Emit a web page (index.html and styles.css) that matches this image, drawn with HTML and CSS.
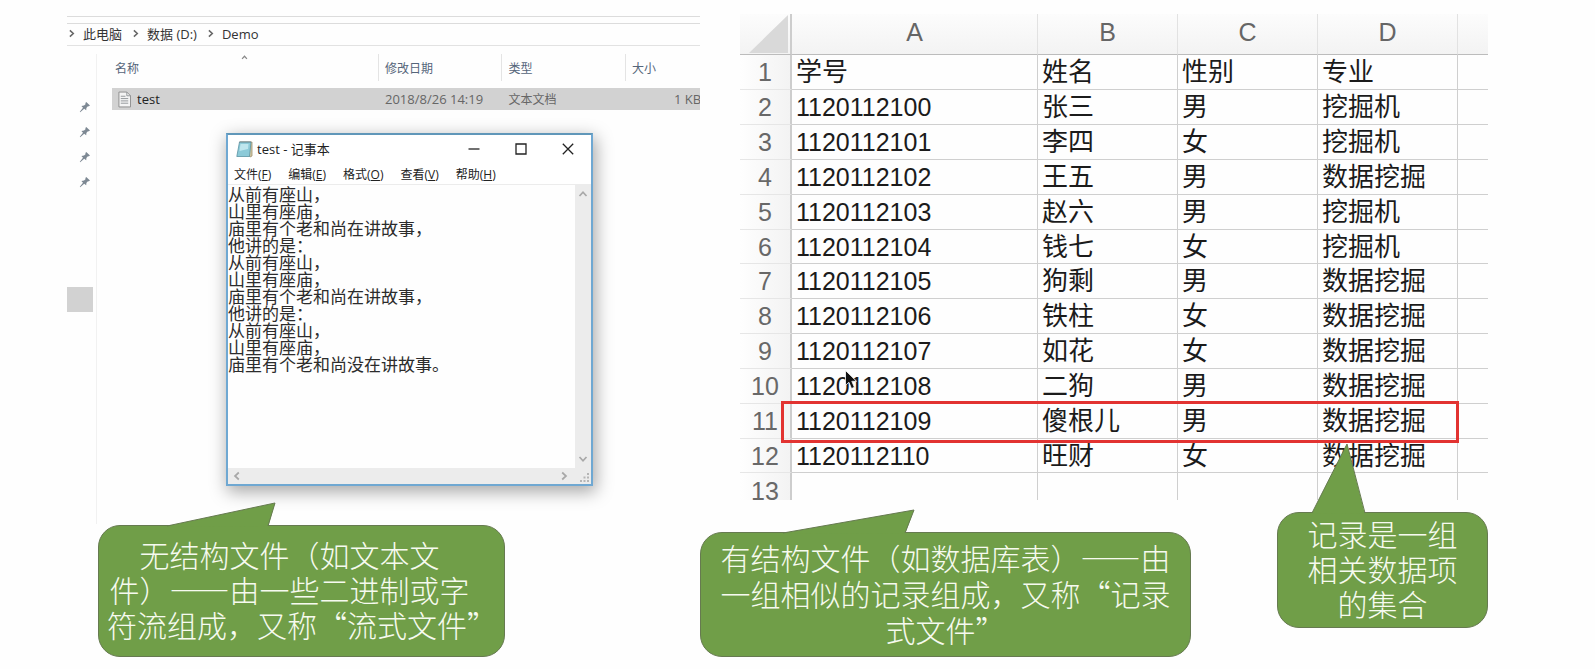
FILE: index.html
```html
<!DOCTYPE html>
<html lang="zh-CN">
<head>
<meta charset="utf-8">
<title>文件的逻辑结构</title>
<link rel="stylesheet" href="styles.css">
</head>
<body>
<svg class="defs" aria-hidden="true">
  <symbol id="pin" viewBox="0 0 12 12"><path d="M7.2 1 11 4.6 9.8 5.2 8.6 5.4 7.4 6.9 7.2 9.2 5.2 7.8 1.2 11.2 .8 10.8 4 6.8 2.4 5 5 4.6 6.5 3.3 6.4 2z" fill="#7d8893"/></symbol>
  <symbol id="up" viewBox="0 0 10 10"><path d="M1.5 7 5 3.2 8.5 7" fill="none" stroke="currentColor" stroke-width="1.7"/></symbol>
  <symbol id="down" viewBox="0 0 10 10"><path d="M1.5 3 5 6.8 8.5 3" fill="none" stroke="currentColor" stroke-width="1.7"/></symbol>
  <symbol id="left" viewBox="0 0 10 10"><path d="M6.8 1.5 3 5 6.8 8.5" fill="none" stroke="currentColor" stroke-width="1.7"/></symbol>
  <symbol id="right" viewBox="0 0 10 10"><path d="M3.2 1.5 7 5 3.2 8.5" fill="none" stroke="currentColor" stroke-width="1.7"/></symbol>
</svg>
<main class="slide">
  <div class="figures">
    <section class="explorer" aria-label="资源管理器">
      <nav class="address">
        <svg class="crumb-sep"><use href="#right"/></svg><a href="#">此电脑</a>
        <svg class="crumb-sep"><use href="#right"/></svg><a href="#">数据 (D:)</a>
        <svg class="crumb-sep"><use href="#right"/></svg><a href="#">Demo</a>
      </nav>
      <div class="panes">
        <aside class="sidebar">
          <div class="pins">
            <svg class="pin"><use href="#pin"/></svg>
            <svg class="pin"><use href="#pin"/></svg>
            <svg class="pin"><use href="#pin"/></svg>
            <svg class="pin"><use href="#pin"/></svg>
          </div>
          <div class="current"></div>
        </aside>
        <div class="files">
          <svg class="sort"><use href="#up"/></svg>
          <table class="file-table">
            <colgroup><col class="f-name"><col class="f-date"><col class="f-type"><col class="f-size"></colgroup>
            <thead><tr><th>名称</th><th>修改日期</th><th>类型</th><th>大小</th></tr></thead>
            <tbody>
              <tr class="spacer"><td colspan="4"></td></tr>
              <tr class="selected">
                <td><span class="file"><svg class="doc" viewBox="0 0 14 17"><path d="M1 .5h8.500l4 4v12H1z" fill="#f4f4f4" stroke="#8a8a8a"/><path d="M9.500.5v4h4M3 5h5M3 7.500h8M3 10h8M3 12.500h8" fill="none" stroke="#8f9396"/></svg>test</span></td>
                <td>2018/8/26 14:19</td><td class="kind">文本文档</td><td class="size">1 KB</td>
              </tr>
            </tbody>
          </table>
        </div>
      </div>

      <section class="notepad" aria-label="记事本">
        <header class="titlebar">
          <svg class="app" viewBox="0 0 17 17"><path d="M4 1h12v14l-2 1z" fill="#d8c9a0" stroke="#9b8f72" stroke-width=".8"/><path d="M3.500 1H15l-1.500 14.500H.8z" fill="#8ccad8" stroke="#5a93a3" stroke-width=".8"/><path d="M4.500 3h8l-.5 5-8.500 2z" fill="#bfe6ee"/><path d="M3.500 1H15" stroke="#777" stroke-dasharray="1 1"/></svg>
          <h1 class="title">test - 记事本</h1>
          <button class="win" aria-label="最小化"><svg viewBox="0 0 12 12"><path d="M.5 6h11" stroke="#222" stroke-width="1.300"/></svg></button>
          <button class="win" aria-label="最大化"><svg viewBox="0 0 12 12"><path d="M1 1h10v10H1z" fill="none" stroke="#222" stroke-width="1.300"/></svg></button>
          <button class="win" aria-label="关闭"><svg viewBox="0 0 12 12"><path d="m.8.8 10.400 10.400m0-10.400L.8 11.200" stroke="#222" stroke-width="1.300"/></svg></button>
        </header>
        <nav class="menu">
          <button>文件(<u>F</u>)</button><button>编辑(<u>E</u>)</button><button>格式(<u>O</u>)</button><button>查看(<u>V</u>)</button><button>帮助(<u>H</u>)</button>
        </nav>
        <div class="editor">
          <textarea class="text" aria-label="文本内容" spellcheck="false">从前有座山，
山里有座庙，
庙里有个老和尚在讲故事，
他讲的是：
从前有座山，
山里有座庙，
庙里有个老和尚在讲故事，
他讲的是：
从前有座山，
山里有座庙，
庙里有个老和尚没在讲故事。</textarea>
          <div class="vbar"><button aria-label="向上"><svg><use href="#up"/></svg></button><button aria-label="向下"><svg><use href="#down"/></svg></button></div>
        </div>
        <div class="hbar">
          <button aria-label="向左"><svg><use href="#left"/></svg></button><button aria-label="向右"><svg><use href="#right"/></svg></button>
          <svg class="grip" viewBox="0 0 10 10"><path d="M7 0h2v2H7zM7 3.500h2v2H7zM7 7h2v2H7zM3.500 3.500h2v2h-2zM3.500 7h2v2h-2zM0 7h2v2H0z" fill="#b5b5b5"/></svg>
        </div>
      </section>
    </section>

    <section class="sheet" aria-label="数据表">
      <table class="grid">
        <colgroup><col class="c-num"><col class="c-a"><col><col><col><col class="c-e"></colgroup>
        <thead><tr><th class="corner"><svg viewBox="0 0 39 38"><path d="M39 0v38H0z" fill="#d9d9d9"/></svg></th><th>A</th><th>B</th><th>C</th><th>D</th><th></th></tr></thead>
        <tbody>
          <tr><th>1</th><td>学号</td><td>姓名</td><td>性别</td><td>专业</td><td></td></tr>
          <tr><th>2</th><td>1120112100</td><td>张三</td><td>男</td><td>挖掘机</td><td></td></tr>
          <tr><th>3</th><td>1120112101</td><td>李四</td><td>女</td><td>挖掘机</td><td></td></tr>
          <tr><th>4</th><td>1120112102</td><td>王五</td><td>男</td><td>数据挖掘</td><td></td></tr>
          <tr><th>5</th><td>1120112103</td><td>赵六</td><td>男</td><td>挖掘机</td><td></td></tr>
          <tr><th>6</th><td>1120112104</td><td>钱七</td><td>女</td><td>挖掘机</td><td></td></tr>
          <tr><th>7</th><td>1120112105</td><td>狗剩</td><td>男</td><td>数据挖掘</td><td></td></tr>
          <tr><th>8</th><td>1120112106</td><td>铁柱</td><td>女</td><td>数据挖掘</td><td></td></tr>
          <tr><th>9</th><td>1120112107</td><td>如花</td><td>女</td><td>数据挖掘</td><td></td></tr>
          <tr><th>10</th><td>1120112108</td><td>二狗</td><td>男</td><td>数据挖掘</td><td></td></tr>
          <tr><th>11</th><td>1120112109</td><td>傻根儿</td><td>男</td><td>数据挖掘</td><td></td></tr>
          <tr><th>12</th><td>1120112110</td><td>旺财</td><td>女</td><td>数据挖掘</td><td></td></tr>
          <tr class="last"><th>13</th><td></td><td></td><td></td><td></td><td></td></tr>
        </tbody>
      </table>
      <div class="record"></div>
      <svg class="cursor" viewBox="0 0 13 20"><path d="M.5.5v14.800l3.400-3 2.600 6.200 2.900-1.200-2.600-6h4.700z" fill="#111" stroke="#fff" stroke-width=".8"/></svg>
    </section>
  </div>

  <div class="callouts">
    <div class="callout stream">
      <svg class="tail" viewBox="0 0 109 25"><path d="M0 24 108 1 101 25z" fill="#709e48"/><path d="M0 24 108 1 101 24" fill="none" stroke="#667a50"/></svg>
      <p>无结构文件（如文本文<br>件）——由一些二进制或字<br>符流组成，又称“流式文件”</p>
    </div>
    <div class="callout records">
      <svg class="tail" viewBox="0 0 133 25"><path d="M0 24 131 1 122 25z" fill="#709e48"/><path d="M0 24 131 1 122 24" fill="none" stroke="#667a50"/></svg>
      <p>有结构文件（如数据库表）——由<br>一组相似的记录组成，又称“记录<br>式文件”</p>
    </div>
    <div class="callout record-note">
      <svg class="tail" viewBox="0 0 54 71"><path d="M0 70 35 1 53 71z" fill="#709e48"/><path d="M0 70 35 1 53 70" fill="none" stroke="#667a50"/></svg>
      <p>记录是一组<br>相关数据项<br>的集合</p>
    </div>
  </div>
</main>
</body>
</html>
```
FILE: styles.css
```css
* { box-sizing: border-box; }
body { margin: 0; background: #fefefe; color: #222; font-family: "Open Sans", "Noto Sans CJK SC", sans-serif; font-size: 13px; }
button { border: 0; padding: 0; background: none; color: inherit; font: inherit; }
table { border-collapse: separate; border-spacing: 0; table-layout: fixed; width: 100%; }
th, td { padding: 0; font-weight: 400; text-align: left; white-space: nowrap; }
.defs { position: absolute; width: 0; height: 0; }

.slide { display: flex; flex-direction: column; gap: 12px; padding: 14px 107px 12px 67px; }
.figures { display: grid; grid-template-columns: minmax(0, 633fr) minmax(0, 748fr); column-gap: 40px; }

/* file explorer */
.explorer { position: relative; display: flex; flex-direction: column; margin-bottom: -24px; padding-top: 2px; }
.address { display: flex; align-items: center; gap: 7px; height: 30px; padding-top: 5px; border-top: 1px solid #dcdcdc; border-bottom: 1px solid #e2e2e2; background: linear-gradient(#dcdcdc, #dcdcdc) 0 6px / 100% 1px no-repeat; }
.address a { margin-right: 2px; color: #333; text-decoration: none; line-height: 20px; }
.crumb-sep { width: 9px; height: 9px; color: #666; }
.panes { display: flex; flex: 1; padding-top: 8px; }
.sidebar { width: 30px; border-right: 1px solid #f1f1f1; }
.pins { display: flex; flex-direction: column; gap: 13px; padding: 47px 0 0 12px; }
.pin { width: 12px; height: 12px; }
.current { width: 26px; height: 25px; margin-top: 99px; background: #d2d2d2; }
.files { position: relative; flex: 1; min-width: 0; padding-left: 15px; overflow: hidden; }
.sort { position: absolute; left: 142px; top: 0; width: 11px; height: 7px; color: #888; }
.f-name { width: 267px; }
.f-date, .f-type { width: 21%; }
.file-table { color: #666; }
.file-table thead th { height: 27px; padding-left: 6px; border-right: 1px solid #e4e4e4; color: #55657a; font-size: 12px; }
.file-table thead th:first-child { padding-left: 3px; }
.file-table thead th:last-child { border-right: 0; }
.spacer td { height: 7px; }
.selected td { height: 22px; padding-left: 6px; background: #d2d2d2; overflow: hidden; }
.selected .kind { font-size: 12px; }
.selected .size { padding-left: 48px; }
.file { display: flex; align-items: center; gap: 6px; color: #222; }
.doc { width: 13px; height: 17px; }

/* notepad window */
.notepad { position: absolute; left: 159px; top: 119px; width: 367px; height: 353px; display: flex; flex-direction: column; background: #fff; border: 2px solid #6fa8d2; border-top-color: #6097b9; box-shadow: 2px 5px 16px 1px rgba(0, 0, 0, .34); }
.titlebar { display: flex; align-items: center; height: 28px; padding-left: 8px; }
.app { width: 17px; height: 17px; }
.title { flex: 1; margin: 0 0 0 4px; font-size: 13px; font-weight: 400; line-height: 20px; }
.win { display: flex; justify-content: center; align-items: center; width: 47px; height: 28px; }
.win svg { width: 12px; height: 12px; }
.menu { display: flex; align-items: center; gap: 17px; height: 22px; padding: 2px 0 0 6px; border-bottom: 1px solid #ececec; font-size: 12px; line-height: 18px; }
.editor { display: flex; flex: 1; min-height: 0; }
.text { flex: 1; min-width: 0; margin: 0; padding: 0; border: 0; outline: 0; resize: none; overflow: hidden; background: #fefefe; color: #2c2c2c; font: 17px/17px "Noto Sans CJK SC", sans-serif; }
.vbar { display: flex; flex-direction: column; justify-content: space-between; align-items: center; width: 16px; padding: 4px 0; background: #ececec; color: #a8a8a8; }
.vbar svg, .hbar svg { display: block; width: 10px; height: 10px; }
.hbar { display: flex; align-items: center; height: 16px; padding: 0 1px 0 4px; background: #ececec; color: #a8a8a8; }
.hbar button:first-child { margin-right: auto; }
.hbar .grip { margin: 4px 0 0 11px; }

/* spreadsheet */
.sheet { position: relative; height: 486px; overflow: hidden; }
.grid { color: #1b1b1b; font: 25px/32px "Liberation Sans", "Noto Sans CJK SC", sans-serif; }
.c-num { width: 52px; }
.c-a { width: 246px; }
.c-e { width: 30px; }
.grid thead th { height: 41px; padding-bottom: 4px; border-right: 1px solid #e2e2e2; border-bottom: 1px solid #bcbcbc; background: linear-gradient(#fcfcfc, #f3f3f3); color: #666; text-align: center; }
.grid thead .corner { padding: 0; border-right: 2px solid #cdcdcd; }
.grid .corner svg { display: block; width: 39px; height: 38px; margin-left: 9px; }
.grid tbody th { border-right: 2px solid #cdcdcd; border-bottom: 1px solid #e6e6e6; background: linear-gradient(90deg, #fefefe, #f3f3f3); color: #686868; text-align: center; }
.grid tbody th, .grid td { height: 35px; }
.grid tr:nth-child(6n) > * { height: 34px; }
.grid td { padding-left: 4px; border-right: 1px solid #cfcfcf; border-bottom: 1px solid #cfcfcf; font-size: 26px; }
.grid td:nth-child(2) { font-size: 25px; }
.grid tr:first-child td:nth-child(2) { font-size: 26px; }
.grid tr > :last-child { border-right: 0; }
.grid .last > * { border-bottom: 0; }
.record { position: absolute; left: 41px; right: 29px; top: 387px; height: 42px; border: 3px solid #e23331; }
.cursor { position: absolute; left: 105px; top: 356px; width: 13px; height: 20px; }

/* callouts */
.callouts { position: relative; display: grid; grid-template-columns: minmax(0, 407fr) minmax(0, 195fr) minmax(0, 491fr) minmax(0, 86fr) minmax(0, 211fr); align-items: end; min-height: 145px; margin-left: 31px; }
.callout { position: relative; border: 1px solid #667a50; border-radius: 22px; background: #709e48; color: #f6faef; text-align: center; white-space: nowrap; font: 30px/35px "Noto Sans CJK SC", sans-serif; font-weight: 300; }
.callout p { margin: 0; }
.tail { position: absolute; bottom: 100%; margin-bottom: -1px; }
.stream { grid-column: 1; padding: 11px 32px 14px 8px; }
.stream .tail { left: 68px; width: 109px; height: 25px; }
.records { grid-column: 3; padding: 6px 0 9px; line-height: 36px; }
.records .tail { left: 82px; width: 133px; height: 25px; }
.record-note { grid-column: 5; align-self: start; padding: 3px 0 6px; }
.record-note .tail { left: 34px; width: 54px; height: 71px; }
```
